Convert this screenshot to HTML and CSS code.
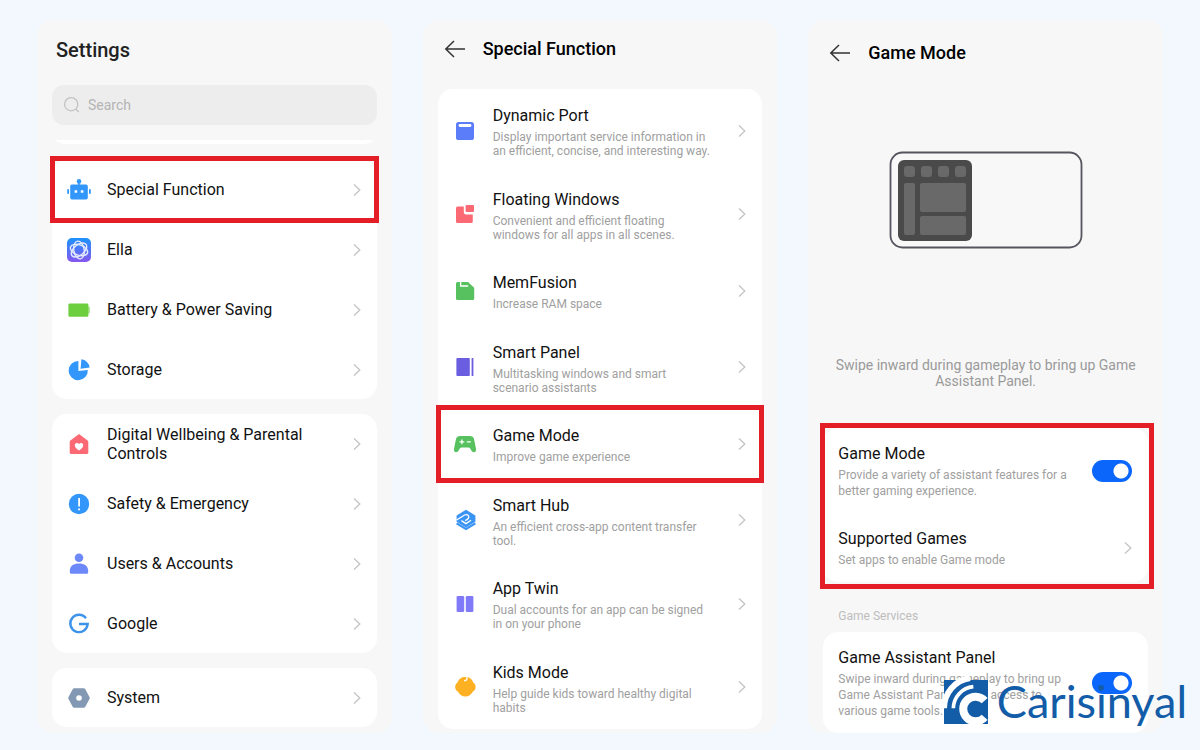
FILE: index.html
```html
<!DOCTYPE html>
<html lang="en">
  <head>
    <meta charset="UTF-8" />
    <meta name="viewport" content="width=device-width, initial-scale=1.0" />
    <title>How to turn on Game Mode</title>
    <link rel="stylesheet" href="styles.css">
  </head>
  <body>
    <!-- shared icons -->
    <svg class="defs" width="0" height="0" aria-hidden="true">
      <symbol id="chevron" viewBox="0 0 12 16">
        <path d="M3 2.5 8.8 8 3 13.5" fill="none" stroke="#c4c4c4" stroke-width="1.3" />
      </symbol>
      <symbol id="back" viewBox="0 0 22 20">
        <path d="M10 2 1.8 10l8.2 8M2 10h19" fill="none" stroke="#333" stroke-width="1.5" />
      </symbol>
    </svg>

    <main class="screens">
      <!-- Settings -->
      <section class="screen">
        <h1 class="title">Settings</h1>
        <label class="search">
          <svg width="18" height="18" viewBox="0 0 18 18" aria-hidden="true">
            <g fill="none" stroke="#c2c2c2" stroke-width="1.3">
              <circle cx="8.2" cy="8.2" r="6.6" />
              <path d="m12.8 13 3 3" />
            </g>
          </svg>
          <input type="search" placeholder="Search" aria-label="Search">
        </label>
        <div class="card-end"></div>

        <nav class="card menu">
          <a href="#special" class="row marked">
            <svg class="icon" viewBox="0 0 24 24">
              <g fill="#3296fa">
                <circle cx="12" cy="3.4" r="2.3" />
                <path d="M11.2 4h1.6v4h-1.6z" />
                <rect x="3.2" y="6.4" width="17.6" height="15" rx="1.6" />
                <rect x="0.2" y="11" width="1.8" height="5" rx=".8" />
                <rect x="22" y="11" width="1.8" height="5" rx=".8" />
              </g>
              <path d="M7.6 12.2h2.6v2.6H7.6zM13.8 12.2h2.6v2.6h-2.6z" fill="#fff" />
            </svg>
            <span class="name">Special Function</span>
            <svg class="chevron"><use href="#chevron" /></svg>
          </a>
          <a href="#ella" class="row">
            <svg class="icon" viewBox="0 0 24 24">
              <defs>
                <linearGradient id="ella-bg" x1="0" y1="0" x2="0" y2="1">
                  <stop offset="0" stop-color="#1c93fb" />
                  <stop offset="1" stop-color="#8557f0" />
                </linearGradient>
              </defs>
              <rect width="24" height="24" rx="5" fill="url(#ella-bg)" />
              <g fill="none" stroke="#e3e9ff" stroke-width="1.4">
                <ellipse cx="12" cy="12" rx="9" ry="5.2" transform="rotate(20 12 12)" />
                <ellipse cx="12" cy="12" rx="9" ry="5.2" transform="rotate(80 12 12)" />
                <ellipse cx="12" cy="12" rx="9" ry="5.2" transform="rotate(140 12 12)" />
              </g>
            </svg>
            <span class="name">Ella</span>
            <svg class="chevron"><use href="#chevron" /></svg>
          </a>
          <a href="#battery" class="row">
            <svg class="icon" viewBox="0 0 24 24">
              <rect x="20" y="8.5" width="3" height="7" rx="1" fill="#b5e79b" />
              <rect x="1.4" y="5.4" width="20" height="13.4" rx="1.4" fill="#6dce3e" />
            </svg>
            <span class="name">Battery &amp; Power Saving</span>
            <svg class="chevron"><use href="#chevron" /></svg>
          </a>
          <a href="#storage" class="row">
            <svg class="icon" viewBox="0 0 24 24">
              <g fill="#3296fa">
                <path d="M11.4 3A9.6 9.6 0 1 0 20.8 12L11.4 13z" />
                <path d="M14.4 1.2a9.4 9.4 0 0 1 8.2 8.2l-9 1.4z" />
              </g>
            </svg>
            <span class="name">Storage</span>
            <svg class="chevron"><use href="#chevron" /></svg>
          </a>
        </nav>

        <nav class="card menu">
          <a href="#wellbeing" class="row">
            <svg class="icon" viewBox="0 0 24 24">
              <path d="M12 2 20.6 8.4q.7.6.7 1.4v10.6q0 1.6-1.6 1.6H4.3q-1.6 0-1.6-1.6V9.8q0-.8.7-1.4z" fill="#fb6974" />
              <path d="M12 18.4c-2.6-1.8-4.2-3.2-4.2-5.2 0-2.6 3-3 4.2-1.2 1.2-1.8 4.2-1.4 4.2 1.2 0 2-1.6 3.400-4.200 5.200z" fill="#fff" />
            </svg>
            <span class="name">Digital Wellbeing &amp; Parental Controls</span>
            <svg class="chevron"><use href="#chevron" /></svg>
          </a>
          <a href="#safety" class="row">
            <svg class="icon" viewBox="0 0 24 24">
              <circle cx="12" cy="12" r="10.2" fill="#3296fa" />
              <path d="M11.2 6h1.8v8.6h-1.8zM11.2 16.4h1.8v1.8h-1.8z" fill="#fff" />
            </svg>
            <span class="name">Safety &amp; Emergency</span>
            <svg class="chevron"><use href="#chevron" /></svg>
          </a>
          <a href="#users" class="row">
            <svg class="icon" viewBox="0 0 24 24">
              <g fill="#6c88f9">
                <circle cx="12" cy="5.8" r="4.3" />
                <path d="M2.8 20.2v-1.4c0-5 4-7.4 9.2-7.4s9.2 2.4 9.2 7.4v1.4q0 1.6-1.6 1.6H4.4q-1.6 0-1.6-1.6z" />
              </g>
            </svg>
            <span class="name">Users &amp; Accounts</span>
            <svg class="chevron"><use href="#chevron" /></svg>
          </a>
          <a href="#google" class="row">
            <svg class="icon" viewBox="0 0 24 24">
              <path d="M19 6.200A8.700 8.700 0 1 0 20.700 12H12" fill="none" stroke="#3d93ea" stroke-width="2.400" />
            </svg>
            <span class="name">Google</span>
            <svg class="chevron"><use href="#chevron" /></svg>
          </a>
        </nav>

        <nav class="card menu">
          <a href="#system" class="row">
            <svg class="icon" viewBox="0 0 24 24">
              <path d="M7.2 2.2h9.6q.9 0 1.4.8l4.4 8.2q.4.8 0 1.6L18.2 21q-.5.8-1.4.8H7.2q-.9 0-1.4-.8L1.4 12.8q-.4-.8 0-1.6L5.8 3q.5-.8 1.4-.8z" fill="#8399b3" />
              <circle cx="12" cy="12" r="2.8" fill="#fff" />
            </svg>
            <span class="name">System</span>
            <svg class="chevron"><use href="#chevron" /></svg>
          </a>
        </nav>
      </section>

      <!-- Special Function -->
      <section class="screen">
        <header class="bar">
          <button type="button" class="back" aria-label="Back"><svg width="22" height="20"><use href="#back" /></svg></button>
          <h2>Special Function</h2>
        </header>
        <nav class="card features">
          <a href="#port" class="row">
            <svg class="icon" viewBox="0 0 24 24">
              <rect x="3" y="3" width="18" height="18" rx="2.6" fill="#5b7dfa" />
              <rect x="5.6" y="5" width="12.8" height="3" rx="1.4" fill="#fff" />
            </svg>
            <span class="text">
              <span class="name">Dynamic Port</span>
              <span class="desc">Display important service information in an efficient, concise, and interesting way.</span>
            </span>
            <svg class="chevron"><use href="#chevron" /></svg>
          </a>
          <a href="#floating" class="row">
            <svg class="icon" viewBox="0 0 24 24">
              <g fill="#fb6974">
                <path d="M4.6 4.4h6.2v5.8q0 2.400 2.400 2.400h6.600v6.800q0 1.600-1.600 1.600H4.600Q3 21 3 19.400V6Q3 4.400 4.600 4.400z" />
                <rect x="12.600" y="3" width="8.400" height="7" rx="1" />
              </g>
            </svg>
            <span class="text">
              <span class="name">Floating Windows</span>
              <span class="desc">Convenient and efficient floating windows for all apps in all scenes.</span>
            </span>
            <svg class="chevron"><use href="#chevron" /></svg>
          </a>
          <a href="#memfusion" class="row">
            <svg class="icon" viewBox="0 0 24 24">
              <path d="M4.6 3H15l6.200 5.800v10.600q0 1.600-1.600 1.600h-15Q3 21 3 19.400V4.600Q3 3 4.600 3z" fill="#57c05f" />
              <path d="M7.600 2.600V7h7.600" fill="none" stroke="#fff" stroke-width="1.300" />
            </svg>
            <span class="text">
              <span class="name">MemFusion</span>
              <span class="desc">Increase RAM space</span>
            </span>
            <svg class="chevron"><use href="#chevron" /></svg>
          </a>
          <a href="#panel" class="row">
            <svg class="icon" viewBox="0 0 24 24">
              <rect x="3.4" y="3" width="13.400" height="18" rx="1" fill="#6a5de0" />
              <rect x="18.600" y="3" width="1.800" height="18" rx=".6" fill="#6a5de0" />
            </svg>
            <span class="text">
              <span class="name">Smart Panel</span>
              <span class="desc">Multitasking windows and smart scenario assistants</span>
            </span>
            <svg class="chevron"><use href="#chevron" /></svg>
          </a>
          <a href="#game" class="row marked">
            <svg class="icon" viewBox="0 0 24 24">
              <path d="M6.600 4h10.800q2.800 0 3.500 2.600l2 9.600c.5 2.400-.4 4-2 4-1.200 0-1.900-.6-2.500-1.600l-1.200-2q-.6-1-1.800-1H8.600q-1.200 0-1.800 1l-1.200 2c-.6 1-1.300 1.600-2.500 1.600-1.600 0-2.500-1.600-2-4l2-9.600Q3.800 4 6.600 4z" fill="#57c05f" />
              <path d="M8.900 7.400v4.800M6.500 9.800h4.800M13.800 9.800h4" fill="none" stroke="#fff" stroke-width="1.300" />
            </svg>
            <span class="text">
              <span class="name">Game Mode</span>
              <span class="desc">Improve game experience</span>
            </span>
            <svg class="chevron"><use href="#chevron" /></svg>
          </a>
          <a href="#hub" class="row">
            <svg class="icon" viewBox="0 0 24 24">
              <path d="M13 1.800 22.400 7.600v6.200L13 19.600 3.600 13.800V7.600z" fill="#3a94f4" />
              <path d="M3.600 15.400 13 21l9.400-5.600" fill="none" stroke="#3a94f4" stroke-width="2.200" />
              <path d="M3.600 12 11.600 7Q15.400 5.600 15.800 9q0 2-3.600 3.600M8.400 12.600l4.600 3 5-3.400" fill="none" stroke="#fff" stroke-width="1.300" />
            </svg>
            <span class="text">
              <span class="name">Smart Hub</span>
              <span class="desc">An efficient cross-app content transfer tool.</span>
            </span>
            <svg class="chevron"><use href="#chevron" /></svg>
          </a>
          <a href="#twin" class="row">
            <svg class="icon" viewBox="0 0 24 24">
              <rect x="3.600" y="4" width="7.600" height="16" rx="1.200" fill="#8079f8" />
              <rect x="12.800" y="4" width="7.600" height="16" rx="1.200" fill="#8079f8" />
            </svg>
            <span class="text">
              <span class="name">App Twin</span>
              <span class="desc">Dual accounts for an app can be signed in on your phone</span>
            </span>
            <svg class="chevron"><use href="#chevron" /></svg>
          </a>
          <a href="#kids" class="row">
            <svg class="icon" viewBox="0 0 24 24">
              <path d="M12.400 2c4 0 6.800 2 7.800 5.600 1.600 1 2.400 2.600 2.400 4.400 0 2-1 3.600-2.600 4.600-1.800 3-4.400 5-7.600 5s-5.800-2-7.600-5C3.200 15.600 2.200 14 2.200 12c0-1.800.8-3.400 2.400-4.400C5.600 4 8.400 2 12.400 2z" fill="#fdb022" />
              <path d="M13.600 1.600q1.600 3.800-2.400 4.200" fill="none" stroke="#fff" stroke-width="1.400" />
            </svg>
            <span class="text">
              <span class="name">Kids Mode</span>
              <span class="desc">Help guide kids toward healthy digital habits</span>
            </span>
            <svg class="chevron"><use href="#chevron" /></svg>
          </a>
        </nav>
      </section>

      <!-- Game Mode -->
      <section class="screen">
        <header class="bar low">
          <button type="button" class="back" aria-label="Back"><svg width="22" height="20"><use href="#back" /></svg></button>
          <h2>Game Mode</h2>
        </header>
        <figure class="preview">
          <svg width="194" height="98" viewBox="0 0 194 98" aria-hidden="true">
            <rect x="1.500" y="1.500" width="191" height="95" rx="12" fill="#f8f8f8" stroke="#55555f" stroke-width="1.800" />
            <rect x="9" y="9" width="74" height="81" rx="6" fill="#4a4a4a" />
            <g fill="#696969">
              <rect x="15" y="15" width="11" height="11" rx="3" />
              <rect x="32" y="15" width="11" height="11" rx="3" />
              <rect x="49" y="15" width="11" height="11" rx="3" />
              <rect x="66" y="15" width="11" height="11" rx="3" />
              <rect x="15" y="32" width="11" height="52" rx="2" />
              <rect x="31" y="32" width="46" height="29" rx="2" />
              <rect x="31" y="65" width="46" height="19" rx="2" />
            </g>
          </svg>
          <figcaption>Swipe inward during gameplay to bring up Game Assistant Panel.</figcaption>
        </figure>

        <div class="card options marked">
          <label class="row">
            <span class="text">
              <span class="name">Game Mode</span>
              <span class="desc">Provide a variety of assistant features for a better gaming experience.</span>
            </span>
            <input type="checkbox" class="switch" checked>
          </label>
          <a href="#supported" class="row">
            <span class="text">
              <span class="name">Supported Games</span>
              <span class="desc">Set apps to enable Game mode</span>
            </span>
            <svg class="chevron"><use href="#chevron" /></svg>
          </a>
        </div>

        <h3 class="group">Game Services</h3>
        <div class="card options">
          <label class="row">
            <span class="text">
              <span class="name">Game Assistant Panel</span>
              <span class="desc">Swipe inward during gameplay to bring up Game Assistant Panel. Easy access to various game tools.</span>
            </span>
            <input type="checkbox" class="switch" checked>
          </label>
        </div>
      </section>
    </main>

    <div class="brand">
      <svg width="50" height="50" viewBox="-18 -18 150 150" aria-hidden="true">
        <rect width="132" height="132" fill="#135ca8" />
        <g fill="none" stroke="#fff">
          <path d="M0 85A92 92 0 0 1 78-6" stroke-width="18" />
          <path d="M28 85A66 66 0 0 1 88 20" stroke-width="11" />
          <path d="M122 62A37 37 0 1 0 122 112" stroke-width="24" />
        </g>
      </svg>
      <span>Carisinyal</span>
    </div>
  </body>
</html>
```
FILE: styles.css
```css
* {
  box-sizing: border-box;
}

body {
  margin: 0;
  background-color: #f3f8ff;
  font-family: Roboto, "Liberation Sans", sans-serif;
  color: #111;
}

h1,
h2,
h3,
figure {
  margin: 0;
  font-weight: 500;
}

.defs {
  position: absolute;
}

.screens {
  display: grid;
  grid-template-columns: repeat(3, 1fr);
  gap: 31px;
  min-height: 100vh;
  padding: 20px 37px 18px;
}

.screen {
  display: flex;
  flex-direction: column;
  padding: 0 15px;
  border-radius: 16px;
  background-color: #f7f7f7;
}

.title {
  padding: 18px 4px 23px;
  font-size: 20px;
  line-height: 24px;
  color: #222;
}

.search {
  display: flex;
  align-items: center;
  gap: 7px;
  height: 40px;
  padding: 0 11px;
  border-radius: 12px;
  background-color: #ededed;
}

.search input {
  flex: 1;
  min-width: 0;
  padding: 0;
  border: none;
  outline: none;
  background: none;
  font: 14px Roboto, sans-serif;
}

.search input::placeholder {
  color: #b4b4b4;
}

/* bottom edge of the card scrolled under the search box */
.card-end {
  height: 4px;
  margin: 15px 4px 16px;
  border-radius: 0 0 12px 12px / 0 0 4px 4px;
  background-color: #fff;
}

.card {
  display: flex;
  flex-direction: column;
  border-radius: 15px;
  background-color: #fff;
}

.row {
  display: flex;
  align-items: center;
  padding: 0 14px 0 15px;
  color: inherit;
  text-decoration: none;
}

.icon {
  flex: none;
  width: 24px;
  height: 24px;
  margin-right: 16px;
}

.chevron {
  flex: none;
  width: 12px;
  height: 16px;
}

.name {
  flex: 1;
  font-size: 16px;
  line-height: 20px;
}

.desc {
  font-size: 12px;
  color: #a0a0a0;
}

.text {
  display: flex;
  flex: 1;
  flex-direction: column;
}

/* red highlight around the thing to tap */
.marked {
  position: relative;
}

.marked::after {
  content: "";
  position: absolute;
  inset: -4px -2px;
  border: 5px solid #e41e26;
  pointer-events: none;
}

/* settings list */
.menu {
  gap: 1px;
}

.menu + .menu {
  margin-top: 15px;
}

.menu .row {
  height: 59px;
}

.menu .name {
  margin-right: 40px;
  line-height: 19px;
}

/* special function list */
.bar {
  display: flex;
  align-items: center;
  gap: 17px;
  padding: 17px 6px 28px;
}

.bar.low {
  padding-top: 21px;
}

.bar h2 {
  font-size: 18px;
  line-height: 24px;
  color: #000;
}

.back {
  display: flex;
  padding: 0;
  border: none;
  background: none;
  cursor: pointer;
}

.features {
  flex: 1;
  margin-bottom: 4px;
}

.features .row {
  flex: 1 0 auto;
}

.features .text {
  gap: 4px;
  padding: 17px 0 14px;
  margin-right: 25px;
}

.features .desc {
  line-height: 14px;
}

.features .name,
.options .name {
  flex: none;
}

/* game mode */
.preview {
  display: flex;
  flex-direction: column;
  align-items: center;
  gap: 108px;
  padding-top: 58px;
  text-align: center;
}

.preview figcaption {
  font-size: 14px;
  line-height: 16px;
  font-weight: 400;
  color: #9a9a9a;
}

.options .text {
  gap: 3px;
  padding: 16px 0 14px;
  margin-right: 14px;
}

.options .desc {
  line-height: 16px;
}

.options.marked {
  margin-top: 39px;
}

.options.marked::after {
  inset: -5px -6px -7px -3px;
}

.group {
  padding: 26px 15px 8px;
  font-size: 12px;
  line-height: 16px;
  font-weight: 400;
  color: #bdbdbd;
}

.switch {
  appearance: none;
  flex: none;
  width: 40px;
  height: 22px;
  margin: 0 2px 0 0;
  border-radius: 11px;
  background: radial-gradient(circle at 29px 11px, #fff 7px, #0b66fb 8px);
}

/* site watermark */
.brand {
  position: absolute;
  right: 13px;
  bottom: 24px;
  display: flex;
  align-items: center;
  gap: 9px;
  font-family: Lato, sans-serif;
  font-size: 45px;
  line-height: 50px;
  color: #135ca8;
}

.brand span {
  padding-top: 4px;
}
```
